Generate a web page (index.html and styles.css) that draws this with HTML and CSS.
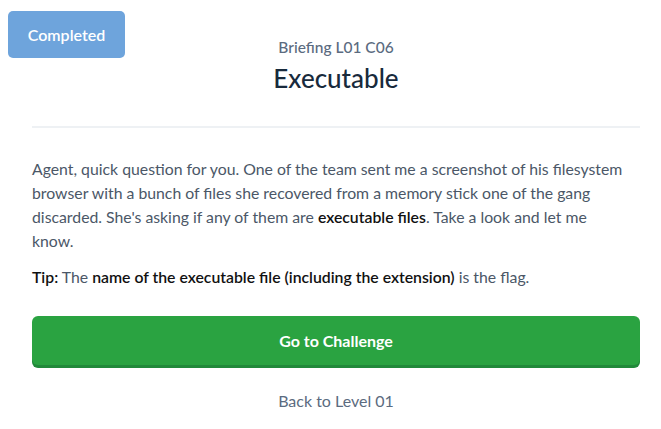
FILE: index.html
```html
<!DOCTYPE html>
<html>
<head>
<meta charset="utf-8">
<link rel="stylesheet" href="styles.css">
</head>
<body>
<div class="page">
  <span class="badge">Completed</span>
  <header class="head">
    <div class="sub">Briefing L01 C06</div>
    <h1 class="title">Executable</h1>
  </header>
  <hr class="rule">
  <p class="text">Agent, quick question for you. One of the team sent me a screenshot of his filesystem browser with a bunch of files she recovered from a memory stick one of the gang discarded. She's asking if any of them are <b>executable files</b>. Take a look and let me know.</p>
  <p class="text tip"><b>Tip:</b> The <b>name of the executable file (including the extension)</b> is the flag.</p>
  <a class="go" href="#">Go to Challenge</a>
  <a class="back" href="#">Back to Level 01</a>
</div>
</body>
</html>
```
FILE: styles.css
```css
html, body {
  margin: 0;
  padding: 0;
  background: #ffffff;
}
body {
  font-family: "Lato", "Noto Sans", sans-serif;
  color: #4b5767;
}
.page {
  position: relative;
  width: 661px;
  height: 429px;
  box-sizing: border-box;
  padding: 37px 21px 0 32px;
  display: flex;
  flex-direction: column;
}
.badge {
  position: absolute;
  left: 8px;
  top: 11px;
  width: 117px;
  height: 47px;
  border-radius: 5px;
  background: #6ea4dc;
  color: #ffffff;
  font-size: 16px;
  font-weight: 600;
  display: flex;
  align-items: center;
  justify-content: center;
}
.head {
  display: flex;
  flex-direction: column;
  align-items: center;
}
.sub {
  font-size: 15.5px;
  line-height: 20px;
  color: #5b6b80;
  font-weight: 500;
}
.title {
  margin: 6px 0 0;
  font-size: 26px;
  line-height: 30px;
  font-weight: 500;
  color: #182a3c;
}
.rule {
  margin: 33px 0 0;
  border: 0;
  height: 2px;
  background: #eef1f4;
}
.text {
  margin: 29px 0 0;
  padding-right: 10px;
  font-size: 15.8px;
  line-height: 24px;
}
.text b {
  font-weight: 600;
  color: #111111;
}
.tip {
  margin-top: 12px;
}
.go {
  margin-top: 27px;
  height: 49px;
  border-radius: 6px;
  background: #2aa341;
  box-shadow: 0 3px 0 #21893a;
  color: #ffffff;
  font-size: 16px;
  font-weight: 700;
  text-decoration: none;
  display: flex;
  align-items: center;
  justify-content: center;
}
.back {
  margin-top: 26px;
  align-self: center;
  font-size: 16px;
  line-height: 20px;
  color: #5b6b80;
  text-decoration: none;
}
```
